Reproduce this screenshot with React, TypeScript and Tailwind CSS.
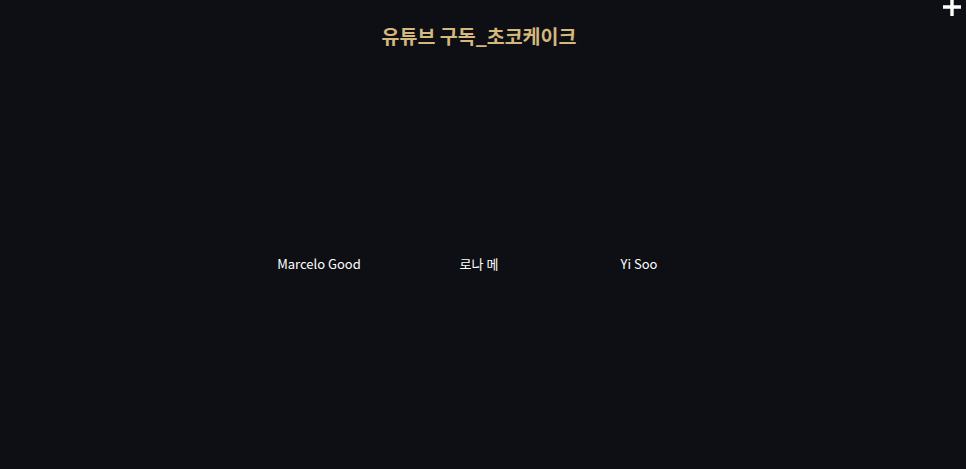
export default function App() {
  const members = ['Marcelo Good', '로나 메', 'Yi Soo'];

  return (
    <div
      className="relative h-[469px] w-full overflow-hidden bg-[#0e0f14]"
      style={{ fontFamily: '"Noto Sans CJK KR", "Noto Sans", sans-serif' }}
    >
      {/* add button, clipped at the top edge */}
      <button className="absolute right-[4px] top-[-3px] text-white">
        <svg width="20" height="20" viewBox="0 0 20 20">
          <path d="M10 1v18M1 10h18" stroke="currentColor" strokeWidth="3.4" />
        </svg>
      </button>

      <div className="flex flex-col items-center pr-[8px] pt-[21px]">
        <h1 className="text-[19.5px] font-bold leading-[29px] text-[#d4b87c]">
          유튜브 구독_초코케이크
        </h1>

        <div className="mt-[204px] flex">
          {members.map((name) => (
            <div key={name} className="flex w-[160px] flex-col items-center">
              <span className="text-[13px] leading-[20px] text-white">{name}</span>
            </div>
          ))}
        </div>
      </div>
    </div>
  );
}
